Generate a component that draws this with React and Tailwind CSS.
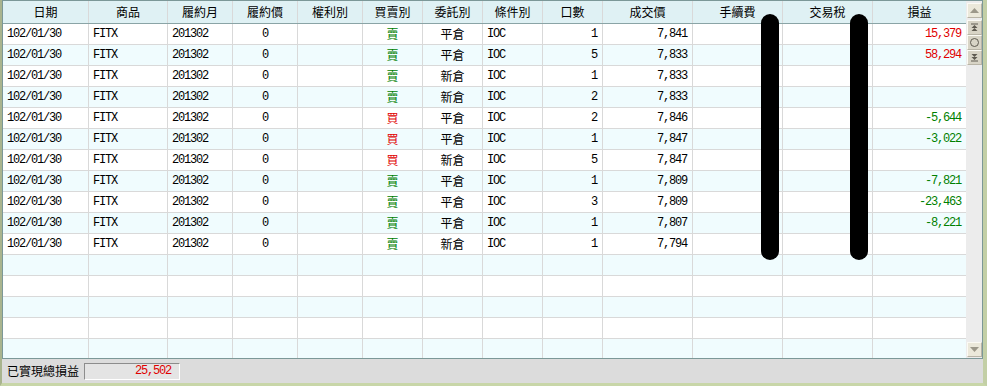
import React from 'react';

// 成交明細表 — 欄位寬度照截圖的格線
const COLS = [
  { key: 'date', title: '日期', w: 86, align: 'left' },
  { key: 'prod', title: '商品', w: 79, align: 'left' },
  { key: 'month', title: '履約月', w: 65, align: 'left' },
  { key: 'strike', title: '履約價', w: 65, align: 'center' },
  { key: 'right', title: '權利別', w: 65, align: 'center' },
  { key: 'side', title: '買賣別', w: 60, align: 'center' },
  { key: 'kind', title: '委託別', w: 60, align: 'center' },
  { key: 'cond', title: '條件別', w: 60, align: 'left' },
  { key: 'qty', title: '口數', w: 60, align: 'right' },
  { key: 'price', title: '成交價', w: 90, align: 'right' },
  { key: 'fee', title: '手續費', w: 90, align: 'right' },
  { key: 'tax', title: '交易稅', w: 90, align: 'right' },
  { key: 'pl', title: '損益', w: 94, align: 'right' },
];

const ROWS = [
  ['賣', '平倉', 1, '7,841', '15,379'],
  ['賣', '平倉', 5, '7,833', '58,294'],
  ['賣', '新倉', 1, '7,833', ''],
  ['賣', '新倉', 2, '7,833', ''],
  ['買', '平倉', 2, '7,846', '-5,644'],
  ['買', '平倉', 1, '7,847', '-3,022'],
  ['買', '新倉', 5, '7,847', ''],
  ['賣', '平倉', 1, '7,809', '-7,821'],
  ['賣', '平倉', 3, '7,809', '-23,463'],
  ['賣', '平倉', 1, '7,807', '-8,221'],
  ['賣', '新倉', 1, '7,794', ''],
].map(([side, kind, qty, price, pl]) => ({
  date: '102/01/30', prod: 'FITX', month: '201302', strike: '0', right: '',
  side, kind, cond: 'IOC', qty: String(qty), price, fee: '', tax: '', pl,
}));

const EMPTY_ROWS = 5;

const mono = "font-['Liberation_Mono',monospace] tracking-[-1.2px]";
const cjk = "font-['Noto_Sans_CJK_TC','Noto_Sans',sans-serif]";

function cellText(col, row) {
  const v = row[col.key];
  if (!v) return null;
  if (col.key === 'side') {
    return <span className={`${cjk} ${v === '買' ? 'text-[#e00000]' : 'text-[#008000]'}`}>{v}</span>;
  }
  if (col.key === 'kind') return <span className={cjk}>{v}</span>;
  if (col.key === 'pl') {
    return <span className={`${mono} ${v.startsWith('-') ? 'text-[#008000]' : 'text-[#e00000]'}`}>{v}</span>;
  }
  return <span className={mono}>{v}</span>;
}

function Cell({ col, children, header }) {
  const justify = header || col.align === 'center' ? 'justify-center' : col.align === 'right' ? 'justify-end pr-[5px]' : 'justify-start pl-[4px]';
  return (
    <div className={`flex h-full shrink-0 items-center border-r border-[#d9d9d9] ${justify}`} style={{ width: col.w }}>
      {children}
    </div>
  );
}

function ScrollBtn({ children, dark }) {
  return (
    <div className={`flex h-[15px] w-[15px] shrink-0 items-center justify-center border border-t-[#fbfaf4] border-l-[#fbfaf4] border-b-[#b8b4a6] border-r-[#b8b4a6] ${dark ? 'bg-[#d8d4c6]' : 'bg-[#ebe8da]'}`}>
      {children}
    </div>
  );
}

const Arrow = ({ down, color = '#9c988a' }) => (
  <svg width="9" height="6" viewBox="0 0 9 6">
    <path d={down ? 'M0 0H9L4.5 5Z' : 'M4.5 0L9 5H0Z'} fill={color} />
  </svg>
);

const Jump = ({ down }) => (
  <svg width="9" height="9" viewBox="0 0 9 9">
    {down ? (
      <>
        <path d="M1.5 1H7.5L4.5 4Z M1.5 4H7.5L4.5 7Z" fill="#5e5a50" />
        <rect x="1" y="7.5" width="7" height="1" fill="#5e5a50" />
      </>
    ) : (
      <>
        <rect x="1" y="0.5" width="7" height="1" fill="#5e5a50" />
        <path d="M4.5 2L7.5 5H1.5Z M4.5 5L7.5 8H1.5Z" fill="#5e5a50" />
      </>
    )}
  </svg>
);

export default function App() {
  return (
    <div className="relative h-[386px] w-[987px] overflow-hidden border-l-2 border-r-4 border-b-[3px] border-l-[#a9b48e] border-r-[#c3cfa6] border-b-[#c8d6a8] bg-[#dcdcdc] text-[12px] text-black">
      {/* 表格 + 捲軸 */}
      <div className="flex h-[359px] overflow-hidden border border-[#7c9898]">
        <div className="flex w-[964px] flex-col overflow-hidden">
          <div className="flex h-[23px] shrink-0 border-b border-[#8aa4a6] bg-[#dff1f4]">
            {COLS.map((c) => (
              <Cell key={c.key} col={c} header>
                <span className={cjk}>{c.title}</span>
              </Cell>
            ))}
          </div>
          {ROWS.map((r, i) => (
            <div key={i} className={`flex h-[21px] shrink-0 border-b border-[#d9d9d9] ${i % 2 ? 'bg-[#f0fcfe]' : 'bg-white'}`}>
              {COLS.map((c) => (
                <Cell key={c.key} col={c}>{cellText(c, r)}</Cell>
              ))}
            </div>
          ))}
          {Array.from({ length: EMPTY_ROWS }).map((_, j) => {
            const i = ROWS.length + j;
            return (
              <div key={i} className={`flex h-[21px] shrink-0 border-b border-[#d9d9d9] ${i % 2 ? 'bg-[#f0fcfe]' : 'bg-white'}`}>
                {COLS.map((c) => <Cell key={c.key} col={c} />)}
              </div>
            );
          })}
        </div>
        <div className="flex w-[16px] flex-col items-end bg-[#ececec] pt-[2px] pb-[1px]">
          <ScrollBtn><Arrow /></ScrollBtn>
          <div className="h-[2px] shrink-0" />
          <ScrollBtn dark><Jump /></ScrollBtn>
          <ScrollBtn dark><span className="block h-[9px] w-[9px] rounded-full border border-[#5e5a50]" /></ScrollBtn>
          <ScrollBtn dark><Jump down /></ScrollBtn>
          <div className="flex-1" />
          <ScrollBtn><Arrow down /></ScrollBtn>
        </div>
      </div>

      {/* 已實現總損益 */}
      <div className="flex h-[24px] items-center pl-[5px]">
        <span className={`${cjk} w-[77px] text-[12px]`}>已實現總損益</span>
        <div className="flex h-[17px] w-[96px] items-center justify-end border border-t-[#8c8c8c] border-l-[#8c8c8c] border-b-white border-r-white bg-[#e4e4e4] pr-[8px]">
          <span className={`${mono} text-[#e00000]`}>25,502</span>
        </div>
      </div>

      {/* 遮蔽條 */}
      <div className="absolute left-[759px] top-[14px] h-[246px] w-[18px] rounded-full bg-black" />
      <div className="absolute left-[848px] top-[14px] h-[246px] w-[18px] rounded-full bg-black" />
    </div>
  );
}
